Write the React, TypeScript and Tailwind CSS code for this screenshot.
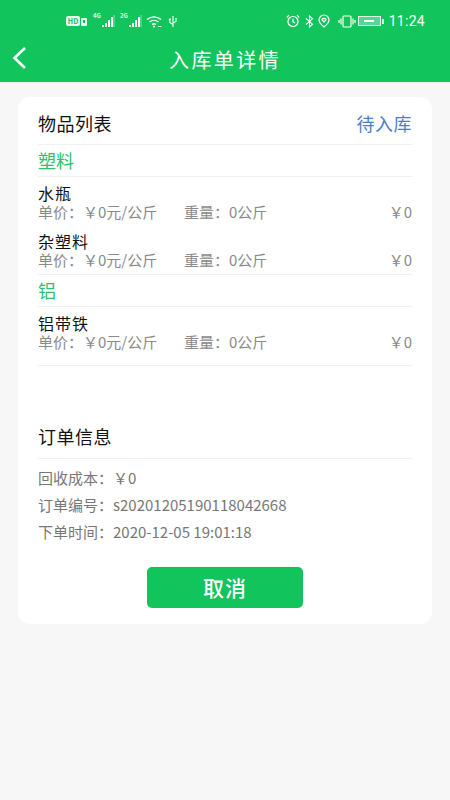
import React from 'react';

const cjk = '"Noto Sans CJK SC", "Liberation Sans", sans-serif';

const goods = [
  {
    group: '塑料',
    items: ['水瓶', '杂塑料'],
  },
  {
    group: '铝',
    items: ['铝带铁'],
  },
];

const Signal = ({ label }: { label: string }) => (
  <div className="relative w-[22px] h-[14px]">
    <span className="absolute left-0 top-[-2px] text-[6px] font-bold leading-[8px] text-white/90">{label}</span>
    <svg width="22" height="14" viewBox="0 0 22 14" className="absolute inset-0">
      <rect x="9" y="11" width="2" height="2" fill="#fff" />
      <rect x="12" y="9" width="2" height="4" fill="#fff" />
      <rect x="15" y="6" width="2" height="7" fill="#fff" />
      <rect x="18" y="3" width="2" height="10" fill="#fff" />
      <rect x="20.500" y="1" width="1" height="12" fill="#fff" opacity="0.5" />
    </svg>
  </div>
);

const StatusBar = () => (
  <div className="h-[42px] flex items-center justify-between pl-[66px] pr-[25px] text-white">
    <div className="flex items-center">
      <span className="w-[14px] h-[10px] bg-white/90 rounded-[2px] text-[#12c45c] text-[7px] font-bold leading-[10px] text-center">HD</span>
      <span className="ml-[1px] w-[6px] h-[8px] mt-[1px] bg-white/90 rounded-[1px] flex items-center justify-center">
        <span className="w-[2px] h-[3px] bg-[#12c45c]" />
      </span>
      <span className="ml-[6px]"><Signal label="4G" /></span>
      <span className="ml-[5px]"><Signal label="2G" /></span>
      <svg width="17" height="13" viewBox="0 0 17 13" fill="none" stroke="#fff" strokeWidth="1.300" className="ml-[4px]">
        <path d="M1 4.500c4-3.600 10-3.600 14 0" />
        <path d="M3.500 7c2.600-2.300 6.400-2.300 9 0" />
        <path d="M6 9.500c1.300-1 2.700-1 4 0" />
        <circle cx="8" cy="11.500" r="0.900" fill="#fff" stroke="none" />
        <path d="M12 11.500h3.500" strokeWidth="1" />
      </svg>
      <svg width="10" height="13" viewBox="0 0 10 13" fill="none" stroke="#fff" strokeWidth="1.100" className="ml-[5px]">
        <path d="M5 1v11M5 9.500 1.800 7.500V5M5 8l3-1.600V4.500" />
        <rect x="0.800" y="3.500" width="2" height="2" fill="#fff" stroke="none" />
        <rect x="7.200" y="3" width="1.600" height="1.600" fill="#fff" stroke="none" />
      </svg>
    </div>
    <div className="flex items-center">
      <svg width="14" height="14" viewBox="0 0 14 14" fill="none" stroke="#fff" strokeWidth="1.200">
        <circle cx="7" cy="7.500" r="5" />
        <path d="M7 4.800V7.700L9 9M.8 3.500 3 1.200M13.200 3.500 11 1.200" />
      </svg>
      <svg width="9" height="13" viewBox="0 0 9 13" fill="none" stroke="#fff" strokeWidth="1.100" className="ml-[5px]">
        <path d="M1 3.500 7.500 9.200 4.500 12V1L7.500 3.800 1 9.500" />
      </svg>
      <svg width="12" height="14" viewBox="0 0 12 14" fill="none" stroke="#fff" strokeWidth="1.200" className="ml-[4px]">
        <path d="M6 13C3 10.500 1 8 1 6a5 5 0 0 1 10 0C11 8 9 10.500 6 13Z" />
        <path d="M6 8 4.300 6.200a1.100 1.100 0 0 1 1.700-1.400 1.100 1.100 0 0 1 1.700 1.400Z" />
      </svg>
      <svg width="18" height="13" viewBox="0 0 18 13" fill="none" stroke="#fff" strokeWidth="1.200" className="ml-[8px]">
        <rect x="5" y="1" width="8" height="11" rx="1" />
        <path d="M3 3.500v6M1 5v3M15 3.500v6M17 5v3" />
      </svg>
      <div className="ml-[2px] w-[23px] h-[10px] border border-white/80 flex items-center justify-center bg-white/30">
        <span className="block w-[10px] h-[2px] bg-white" />
      </div>
      <span className="ml-[1px] w-[2px] h-[5px] bg-white/80" />
      <span className="ml-[5px] text-[14px] leading-none tracking-[0.3px]" style={{ fontFamily: '"Roboto", sans-serif' }}>11:24</span>
    </div>
  </div>
);

const Header = () => (
  <div className="relative h-[40px] flex items-center justify-center">
    <svg width="16" height="24" viewBox="0 0 16 24" fill="none" stroke="#fff" strokeWidth="2.600" className="absolute left-[11px] top-[4px]">
      <path d="M14 2 3.500 12 14 22" />
    </svg>
    <span className="text-white text-[20px] tracking-[2.400px] leading-none mt-[-4px]">入库单详情</span>
  </div>
);

const GoodsRow = ({ name }: { name: string }) => (
  <div className="h-[48px] pt-[6px]">
    <div className="text-[16px] leading-[20px] text-[#111] tracking-[1px]">{name}</div>
    <div className="flex text-[15px] leading-[17px] text-[#8a8a8a]">
      <span className="w-[146px]">单价：￥0元/公斤</span>
      <span>重量：0公斤</span>
      <span className="ml-auto">￥0</span>
    </div>
  </div>
);

export default function App() {
  return (
    <div className="w-[450px] h-[800px] bg-[#f7f7f7] overflow-hidden" style={{ fontFamily: cjk }}>
      <div className="h-[82px] bg-[#12c45c]">
        <StatusBar />
        <Header />
      </div>
      <div className="mx-[18px] mt-[15px] h-[527px] bg-white rounded-[12px] px-[20px]">
        <div className="h-[48px] flex items-center justify-between border-b border-[#f0f0f0] pt-[6px]">
          <span className="text-[18px] text-[#111] tracking-[0.500px]">物品列表</span>
          <span className="text-[18px] text-[#4a80c8] tracking-[0.500px]">待入库</span>
        </div>
        {goods.map((g, i) => (
          <div key={g.group} className={i === 0 ? 'border-b border-[#f0f0f0] pb-[1px]' : 'border-b border-[#f0f0f0] pb-[10px]'}>
            <div className="h-[32px] flex items-center border-b border-[#f0f0f0] text-[18px] text-[#2fbf6e]">{g.group}</div>
            {g.items.map(name => (
              <GoodsRow key={name} name={name} />
            ))}
          </div>
        ))}
        <div className="h-[93px] flex items-end border-b border-[#f0f0f0] pb-[10px]">
          <span className="text-[18px] text-[#111] leading-[24px] tracking-[0.500px]">订单信息</span>
        </div>
        <div className="pt-[5px] text-[15px] leading-[27px] text-[#777]">
          <div>回收成本：￥0</div>
          <div>订单编号：s20201205190118042668</div>
          <div>下单时间：2020-12-05 19:01:18</div>
        </div>
        <div className="flex justify-center mt-[22px]">
          <button type="button" className="w-[156px] h-[41px] rounded-[5px] bg-[#12c45c] text-white text-[21px] font-medium tracking-[1px]">取消</button>
        </div>
      </div>
    </div>
  );
}
